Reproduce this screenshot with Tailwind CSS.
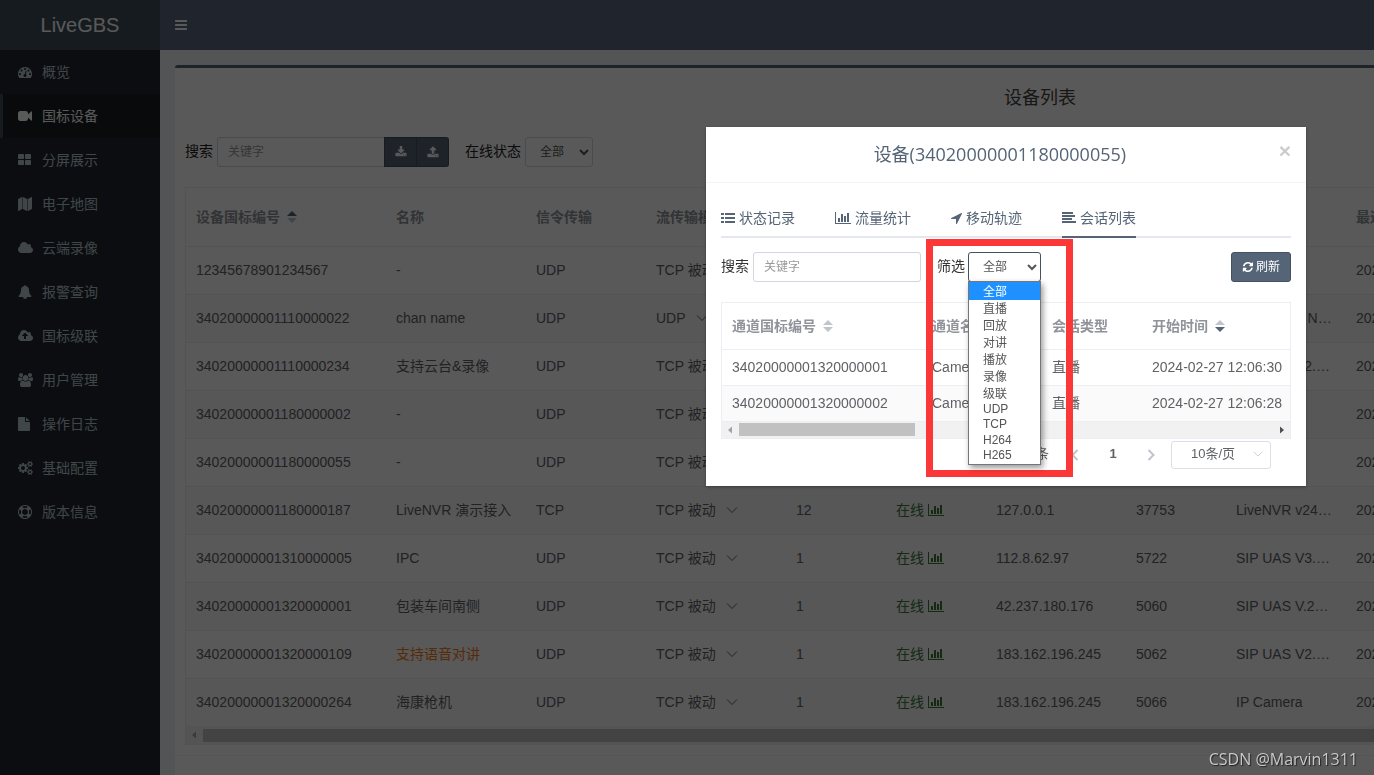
<!DOCTYPE html>
<html lang="zh-CN">
<head>
<meta charset="utf-8">
<title>LiveGBS</title>
<script src="https://cdn.jsdelivr.net/npm/@tailwindcss/browser@4"></script>
</head>
<body class="h-screen overflow-hidden bg-[#ecf0f5] font-['Liberation_Sans','Noto_Sans_CJK_SC',sans-serif] text-sm text-[#333]">
<svg class="hidden">
  <symbol id="bars" viewBox="0 0 1792 1792"><path d="M1664 1344v128q0 26-19 45t-45 19h-1408q-26 0-45-19t-19-45v-128q0-26 19-45t45-19h1408q26 0 45 19t19 45zm0-512v128q0 26-19 45t-45 19h-1408q-26 0-45-19t-19-45v-128q0-26 19-45t45-19h1408q26 0 45 19t19 45zm0-512v128q0 26-19 45t-45 19h-1408q-26 0-45-19t-19-45v-128q0-26 19-45t45-19h1408q26 0 45 19t19 45z"/></symbol>
  <symbol id="dashboard" viewBox="0 0 1792 1792"><path d="M384 1152q0-53-37.500-90.500t-90.500-37.500-90.500 37.500-37.500 90.500 37.500 90.500 90.500 37.500 90.500-37.500 37.500-90.500zm192-448q0-53-37.500-90.500t-90.500-37.500-90.500 37.500-37.500 90.500 37.500 90.500 90.500 37.500 90.500-37.500 37.500-90.500zm428 481l101-382q6-26-7.500-48.500t-38.500-29.500-48 6.500-30 39.500l-101 382q-60 5-107 43.500t-63 98.500q-20 77 20 146t117 89 146-20 89-117q16-60-6-117t-72-91zm660-33q0-53-37.500-90.500t-90.500-37.500-90.500 37.500-37.500 90.500 37.500 90.500 90.500 37.500 90.500-37.500 37.500-90.500zm-640-640q0-53-37.500-90.500t-90.500-37.500-90.500 37.500-37.500 90.500 37.500 90.500 90.500 37.500 90.500-37.500 37.500-90.500zm448 192q0-53-37.500-90.500t-90.500-37.500-90.500 37.500-37.500 90.500 37.500 90.500 90.500 37.500 90.500-37.500 37.500-90.500zm320 448q0 261-141 483-19 29-54 29h-1402q-35 0-54-29-141-221-141-483 0-182 71-348t191-286 286-191 348-71 348 71 286 191 191 286 71 348z"/></symbol>
  <symbol id="video" viewBox="0 0 1792 1792"><path d="M1792 352v1088q0 42-39 59-13 5-25 5-27 0-45-19l-403-403v166q0 119-84.500 203.500t-203.500 84.500h-704q-119 0-203.500-84.500t-84.500-203.500v-704q0-119 84.500-203.500t203.500-84.500h704q119 0 203.500 84.500t84.500 203.500v165l403-402q18-19 45-19 12 0 25 5 39 17 39 59z"/></symbol>
  <symbol id="thlarge" viewBox="64 0 1792 1792"><path d="M832 1024v384q0 52-38 90t-90 38h-512q-52 0-90-38t-38-90v-384q0-52 38-90t90-38h512q52 0 90 38t38 90zm0-768v384q0 52-38 90t-90 38h-512q-52 0-90-38t-38-90v-384q0-52 38-90t90-38h512q52 0 90 38t38 90zm896 768v384q0 52-38 90t-90 38h-512q-52 0-90-38t-38-90v-384q0-52 38-90t90-38h512q52 0 90 38t38 90zm0-768v384q0 52-38 90t-90 38h-512q-52 0-90-38t-38-90v-384q0-52 38-90t90-38h512q52 0 90 38t38 90z"/></symbol>
  <symbol id="map" viewBox="0 0 2048 1792"><path d="M512 0q13 0 22.500 9.500t9.500 22.500v1472q0 20-17 28l-480 256q-7 4-15 4-13 0-22.500-9.500t-9.500-22.500v-1472q0-20 17-28l480-256q7-4 15-4zm1248 0q13 0 22.500 9.500t9.500 22.500v1472q0 20-17 28l-480 256q-7 4-15 4-13 0-22.500-9.500t-9.500-22.500v-1472q0-20 17-28l480-256q7-4 15-4zm-1120 0q8 0 14 3l512 256q18 10 18 29v1472q0 13-9.500 22.500t-22.500 9.500q-8 0-14-3l-512-256q-18-10-18-29v-1472q0-13 9.500-22.500t22.500-9.500z"/></symbol>
  <symbol id="cloud" viewBox="0 0 2048 1792"><path d="M1920 1152q0 159-112.500 271.500t-271.500 112.500h-1088q-185 0-316.500-131.500t-131.500-316.500q0-132 71-241.500t187-163.500q-2-28-2-43 0-212 150-362t362-150q158 0 286.500 88t187.500 230q70-62 166-62 106 0 181 75t75 181q0 75-41 138 129 30 213 134.500t84 239.500z"/></symbol>
  <symbol id="cloudup" viewBox="0 0 2048 1792"><path d="M1280 864q0-14-9-23l-352-352q-9-9-23-9t-23 9l-351 351q-10 12-10 24 0 14 9 23t23 9h224v352q0 13 9.500 22.500t22.500 9.500h192q13 0 22.500-9.500t9.500-22.500v-352h224q13 0 22.500-9.500t9.500-22.500zm640 288q0 159-112.500 271.500t-271.500 112.500h-1088q-185 0-316.500-131.500t-131.500-316.500q0-130 70-240t188-165q-2-30-2-43 0-212 150-362t362-150q156 0 285.500 87t188.500 231q71-62 166-62 106 0 181 75t75 181q0 76-41 138 130 31 213.500 135.500t83.500 238.500z"/></symbol>
  <symbol id="bell" viewBox="0 0 1792 1792"><path d="M912 1696q0-16-16-16-59 0-101.500-42.500t-42.500-101.500q0-16-16-16t-16 16q0 73 51.500 124.500t124.500 51.500q16 0 16-16zm816-288q0 52-38 90t-90 38h-448q0 106-75 181t-181 75-181-75-75-181h-448q-52 0-90-38t-38-90q50-42 91-88t85-119.500 74.500-158.500 50-206 19.500-260q0-152 117-282.500t307-158.500q-8-19-8-39 0-40 28-68t68-28 68 28 28 68q0 20-8 39 190 28 307 158.500t117 282.500q0 139 19.500 260t50 206 74.500 158.500 85 119.500 91 88z"/></symbol>
  <symbol id="users" viewBox="64 0 2048 1792"><path d="M657 896q-162 5-265 128h-134q-82 0-138-40.500t-56-118.500q0-353 124-353 6 0 43.500 21t97.500 42.500 119 21.500q67 0 133-23-5 37-5 66 0 139 81 256zm1071 637q0 120-73 189.500t-194 69.500h-874q-121 0-194-69.500t-73-189.500q0-53 3.500-103.500t14-109 26.500-108.500 43-97.500 62-81 85.500-53.500 111.500-20q10 0 43 21.500t73 48 107 48 135 21.500 135-21.500 107-48 73-48 43-21.500q61 0 111.500 20t85.500 53.500 62 81 43 97.500 26.500 108.500 14 109 3.500 103.500zm-1024-1277q0 106-75 181t-181 75-181-75-75-181 75-181 181-75 181 75 75 181zm704 384q0 159-112.500 271.500t-271.500 112.500-271.500-112.500-112.500-271.500 112.500-271.500 271.500-112.500 271.500 112.500 112.500 271.500zm576 225q0 78-56 118.500t-138 40.500h-134q-103-123-265-128 81-117 81-256 0-29-5-66 66 23 133 23 59 0 119-21.500t97.500-42.500 43.500-21q124 0 124 353zm-128-609q0 106-75 181t-181 75-181-75-75-181 75-181 181-75 181 75 75 181z"/></symbol>
  <symbol id="file" viewBox="128 0 1792 1792"><path d="M1152 512v-472q22 14 36 28l408 408q14 14 28 36h-472zm-128 32q0 40 28 68t68 28h544v1056q0 40-28 68t-68 28h-1344q-40 0-68-28t-28-68v-1600q0-40 28-68t68-28h800v544z"/></symbol>
  <symbol id="cogs" viewBox="0 0 2048 1792"><path d="M896 896q0-106-75-181t-181-75-181 75-75 181 75 181 181 75 181-75 75-181zm768 512q0-52-38-90t-90-38-90 38-38 90q0 53 37.500 90.500t90.500 37.500 90.500-37.500 37.500-90.500zm0-1024q0-52-38-90t-90-38-90 38-38 90q0 53 37.500 90.500t90.500 37.500 90.500-37.500 37.500-90.500zm-384 421v185q0 10-7 19.500t-16 10.500l-155 24q-11 35-32 76 34 48 90 115 7 11 7 20 0 12-7 19-23 30-82.500 89.500t-78.500 59.500q-11 0-21-7l-115-90q-37 19-77 31-11 108-23 155-7 24-30 24h-186q-11 0-20-7.500t-10-17.500l-23-153q-34-10-75-31l-118 89q-7 7-20 7-11 0-21-8-144-133-144-160 0-9 7-19 10-14 41-53t47-61q-23-44-35-82l-152-24q-10-1-17-9.500t-7-19.500v-185q0-10 7-19.500t16-10.500l155-24q11-35 32-76-34-48-90-115-7-11-7-20 0-12 7-20 22-30 82-89t79-59q11 0 21 7l115 90q34-18 77-32 11-108 23-154 7-24 30-24h186q11 0 20 7.500t10 17.500l23 153q34 10 75 31l118-89q8-7 20-7 11 0 21 8 144 133 144 160 0 8-7 19-12 16-42 54t-45 60q23 48 34 82l152 23q10 2 17 10.500t7 19.500zm640 533v140q0 16-149 31-12 27-30 52 51 113 51 138 0 4-4 7-122 71-124 71-8 0-46-47t-52-68q-20 2-30 2t-30-2q-14 21-52 68t-46 47q-2 0-124-71-4-3-4-7 0-25 51-138-18-25-30-52-149-15-149-31v-140q0-16 149-31 13-29 30-52-51-113-51-138 0-4 4-7 4-2 35-20t59-34 30-16q8 0 46 46.500t52 67.500q20-2 30-2t30 2q51-71 92-112l6-2q4 0 124 70 4 3 4 7 0 25-51 138 17 23 30 52 149 15 149 31zm0-1024v140q0 16-149 31-12 27-30 52 51 113 51 138 0 4-4 7-122 71-124 71-8 0-46-47t-52-68q-20 2-30 2t-30-2q-14 21-52 68t-46 47q-2 0-124-71-4-3-4-7 0-25 51-138-18-25-30-52-149-15-149-31v-140q0-16 149-31 13-29 30-52-51-113-51-138 0-4 4-7 4-2 35-20t59-34 30-16q8 0 46 46.500t52 67.500q20-2 30-2t30 2q51-71 92-112l6-2q4 0 124 70 4 3 4 7 0 25-51 138 17 23 30 52 149 15 149 31z"/></symbol>
  <symbol id="ring" viewBox="0 0 1792 1792"><path d="M896 0q182 0 348 71t286 191 191 286 71 348-71 348-191 286-286 191-348 71-348-71-286-191-191-286-71-348 71-348 191-286 286-191 348-71zm0 128q-190 0-361 90l194 194q82-28 167-28t167 28l194-194q-171-90-361-90zm-678 1129l194-194q-28-82-28-167t28-167l-194-194q-90 171-90 361t90 361zm678 407q190 0 361-90l-194-194q-82 28-167 28t-167-28l-194 194q171 90 361 90zm0-384q159 0 271.500-112.500t112.500-271.500-112.500-271.500-271.500-112.500-271.500 112.500-112.500 271.500 112.500 271.500 271.500 112.500zm484-217l194 194q90-171 90-361t-90-361l-194 194q28 82 28 167t-28 167z"/></symbol>
  <symbol id="download" viewBox="0 0 1792 1792"><path d="M1344 1344q0-26-19-45t-45-19-45 19-19 45 19 45 45 19 45-19 19-45zm256 0q0-26-19-45t-45-19-45 19-19 45 19 45 45 19 45-19 19-45zm128-224v320q0 40-28 68t-68 28h-1472q-40 0-68-28t-28-68v-320q0-40 28-68t68-28h465l135 136q58 56 136 56t136-56l136-136h464q40 0 68 28t28 68zm-325-569q17 41-14 70l-448 448q-18 19-45 19t-45-19l-448-448q-31-29-14-70 17-39 59-39h256v-448q0-26 19-45t45-19h256q26 0 45 19t19 45v448h256q42 0 59 39z"/></symbol>
  <symbol id="upload" viewBox="0 0 1792 1792"><path d="M1344 1472q0-26-19-45t-45-19-45 19-19 45 19 45 45 19 45-19 19-45zm256 0q0-26-19-45t-45-19-45 19-19 45 19 45 45 19 45-19 19-45zm128-224v320q0 40-28 68t-68 28h-1472q-40 0-68-28t-28-68v-320q0-40 28-68t68-28h427q21 56 70.500 92t110.500 36h256q61 0 110.500-36t70.500-92h427q40 0 68 28t28 68zm-325-648q-17 40-59 40h-256v448q0 26-19 45t-45 19h-256q-26 0-45-19t-19-45v-448h-256q-42 0-59-40-17-39 14-69l448-448q18-19 45-19t45 19l448 448q31 30 14 69z"/></symbol>
  <symbol id="chart" viewBox="0 0 2048 1792"><path d="M640 896v512h-256v-512h256zm384-512v1024h-256v-1024h256zm1024 1152v128h-2048v-1536h128v1408h1920zm-640-896v768h-256v-768h256zm384-384v1152h-256v-1152h256z"/></symbol>
  <symbol id="arrow" viewBox="192 0 1408 1792"><path d="M1593 349l-640 1280q-17 35-57 35-5 0-15-2-22-5-35.500-22.500t-13.500-39.500v-576h-576q-22 0-39.500-13.500t-22.500-35.500 4-42 29-30l1280-640q13-7 29-7 27 0 45 19 15 14 18.500 34.500t-6.500 39.500z"/></symbol>
  <symbol id="refresh" viewBox="0 0 1664 1792"><path d="M1639 1056q0 5-1 7-64 268-268 434.500t-478 166.500q-146 0-282.500-55t-243.500-157l-129 129q-19 19-45 19t-45-19-19-45v-448q0-26 19-45t45-19h448q26 0 45 19t19 45-19 45l-137 137q71 66 161 102t187 36q134 0 250-65t186-179q11-17 53-117 8-23 30-23h192q13 0 22.500 9.500t9.500 22.500zm25-800v448q0 26-19 45t-45 19h-448q-26 0-45-19t-19-45 19-45l138-138q-148-137-349-137-134 0-250 65t-186 179q-11 17-53 117-8 23-30 23h-199q-13 0-22.500-9.500t-9.500-22.500v-7q65-268 270-434.500t480-166.500q146 0 284 55.500t245 156.500l130-129q19-19 45-19t45 19 19 45z"/></symbol>
  <symbol id="list" viewBox="0 0 14 14"><path d="M0 2h3v2H0zM4 2h10v2H4zM0 6h3v2H0zM4 6h10v2H4zM0 10h3v2H0zM4 10h10v2H4z"/></symbol>
  <symbol id="align" viewBox="0 0 14 14"><path d="M0 1h11v2H0zM0 4h13v2H0zM0 7h10v2H0zM0 10h14v2H0z"/></symbol>
  <symbol id="down" viewBox="0 0 12 12"><path d="M1 3.500l5 5 5-5" fill="none" stroke="currentColor"/></symbol>
</svg>

<div class="min-w-[1920px]">
  <header class="flex h-[50px] text-white">
    <a href="#" class="flex w-[160px] items-center justify-center bg-[#3f4f5b] text-xl">LiveGBS</a>
    <div class="flex flex-1 items-center bg-[#5a6980] pl-3.5">
      <button aria-label="菜单" class="flex"><svg class="size-3.5 fill-current"><use href="#bars"/></svg></button>
    </div>
  </header>
  <div class="flex">
    <nav class="h-screen w-[160px] shrink-0 bg-[#202731] text-[#b8c7ce]" id="nav"></nav>
    <main class="flex-1 p-[15px]">
      <section class="h-screen rounded-t-[3px] border-t-3 border-[#556577] bg-white">
        <h1 class="flex h-[60px] items-center justify-center text-lg text-[#444]">设备列表</h1>
        <div class="mt-[9px] flex h-[30px] items-center px-2.5">
          <label for="q1" class="mr-1 pb-0.5 text-[#222]">搜索</label>
          <input id="q1" placeholder="关键字" class="h-[30px] w-[167px] rounded-l-[3px] border border-r-0 border-[#d2d6de] px-2.5 text-xs placeholder:text-[#999]">
          <button aria-label="导入" class="flex h-[30px] w-[33px] items-center justify-center border border-[#44515f] bg-[#556577] text-white"><svg class="h-3 w-3.5 fill-current"><use href="#download"/></svg></button>
          <button aria-label="导出" class="flex h-[30px] w-8 items-center justify-center rounded-r-[3px] border border-l-0 border-[#44515f] bg-[#556577] text-white"><svg class="h-3 w-3.5 fill-current"><use href="#upload"/></svg></button>
          <label for="s1" class="mr-1 ml-4 pb-0.5 text-[#222]">在线状态</label>
          <select id="s1" class="h-[30px] w-[68px] rounded-[3px] border border-[#d2d6de] bg-white px-2.5 text-xs text-[#555]"><option>全部</option><option>在线</option><option>离线</option></select>
        </div>
        <div class="mx-2.5 mt-5 overflow-hidden border border-[#ebeef5]">
          <table class="w-full table-fixed border-collapse text-left">
            <thead><tr class="h-[58px] border-b border-[#ebeef5] text-[#909399]">
              <th class="w-[200px] px-2.5"><span class="flex items-center gap-[7px]">设备国标编号 <svg class="h-3 w-2.5" viewBox="0 0 10 12"><path d="M0 5l5-5 5 5z" fill="#556577"/><path d="M0 7l5 5 5-5z" fill="#c0c4cc"/></svg></span></th>
              <th class="w-[140px] px-2.5">名称</th><th class="w-[120px] px-2.5">信令传输</th><th class="w-[140px] px-2.5">流传输模式</th><th class="w-[100px] px-2.5">通道数</th><th class="w-[100px] px-2.5">在线状态</th><th class="w-[140px] px-2.5">出口IP</th><th class="w-[100px] px-2.5">端口</th><th class="w-[120px] px-2.5">厂家</th><th class="px-2.5">最近心跳</th>
            </tr></thead>
            <tbody id="rows" class="text-[#606266]"></tbody>
          </table>
          <div class="flex h-[17px] items-center bg-[#f1f1f1]">
            <svg class="ml-1.5 h-2 w-1 fill-[#a3a3a3]" viewBox="0 0 4 7"><path d="M4 0v7L0 3.500z"/></svg>
            <div class="ml-[7px] h-[13px] flex-1 bg-[#c1c1c1]"></div>
          </div>
        </div>
        <div class="mt-2.5 border-t border-[#f4f4f4]"></div>
      </section>
    </main>
  </div>
</div>

<div class="fixed inset-0 bg-black/65"></div>

<div role="dialog" aria-labelledby="dt" class="absolute top-[127px] left-[706px] w-[600px] bg-white pb-[17px] shadow-[0_1px_3px_rgba(0,0,0,0.3)]">
  <div class="flex h-14 items-center border-b border-[#f4f4f4] pr-[15px] pl-[15px]">
    <h2 id="dt" class="flex-1 pb-0.5 text-center font-['Open_Sans','Noto_Sans_CJK_SC',sans-serif] text-lg text-[#556577]">设备(34020000001180000055)</h2>
    <button aria-label="关闭" class="flex h-8 items-start text-[21px] leading-6 font-bold text-[#ccc]">×</button>
  </div>
  <div class="px-[15px] pt-4">
    <div role="tablist" class="flex h-[39px] gap-10 border-b-2 border-[#e4e7ed] text-[#556577]">
      <button role="tab" class="flex items-center gap-1"><svg class="size-3.5 fill-current"><use href="#list"/></svg>状态记录</button>
      <button role="tab" class="flex items-center gap-1"><svg class="h-3.5 w-4 fill-current"><use href="#chart"/></svg>流量统计</button>
      <button role="tab" class="flex items-center gap-1"><svg class="h-3.5 w-[11px] fill-current"><use href="#arrow"/></svg>移动轨迹</button>
      <button role="tab" aria-selected="true" class="-mb-0.5 flex items-center gap-1 border-b-2 border-[#556577]"><svg class="size-3.5 fill-current"><use href="#align"/></svg>会话列表</button>
    </div>
    <div class="mt-3.5 flex h-[30px] items-center">
      <label for="q2" class="mr-1 pb-0.5">搜索</label>
      <input id="q2" placeholder="关键字" class="h-[30px] w-[168px] rounded-[3px] border border-[#d2d6de] px-2.5 text-xs placeholder:text-[#999]">
      <label for="s2" class="mr-[3px] ml-4 pb-0.5">筛选</label>
      <div class="relative">
        <select id="s2" class="block h-[30px] w-[73px] rounded-[3px] border border-[#44515f] bg-white px-2.5 text-xs text-[#555]"><option>全部</option></select>
        <ul role="listbox" aria-label="筛选" class="absolute top-[29px] left-0 z-10 w-[73px] border border-[#767676] bg-white pb-px text-xs text-[#555] shadow-[2px_3px_6px_rgba(0,0,0,0.4)]">
          <li role="option" aria-selected="true" class="h-[18px] bg-[#1e90ff] pl-3.5 leading-5 text-white">全部</li>
          <li role="option" class="h-[17px] pl-3.5 leading-[19px]">直播</li>
          <li role="option" class="h-[17px] pl-3.5 leading-[19px]">回放</li>
          <li role="option" class="h-[17px] pl-3.5 leading-[19px]">对讲</li>
          <li role="option" class="h-[17px] pl-3.5 leading-[19px]">播放</li>
          <li role="option" class="h-[17px] pl-3.5 leading-[19px]">录像</li>
          <li role="option" class="h-[17px] pl-3.5 leading-[19px]">级联</li>
          <li role="option" class="h-[15px] pl-3.5 leading-[15px]">UDP</li>
          <li role="option" class="h-[15px] pl-3.5 leading-[15px]">TCP</li>
          <li role="option" class="h-4 pl-3.5 leading-4">H264</li>
          <li role="option" class="h-[15px] pl-3.5 leading-[15px]">H265</li>
        </ul>
      </div>
      <button class="ml-auto flex h-[30px] w-[60px] items-center justify-center gap-[3px] rounded-[3px] border border-[#44515f] bg-[#556577] text-xs text-white"><svg class="h-3 w-[11px] fill-current"><use href="#refresh"/></svg>刷新</button>
    </div>
    <div class="mt-5 overflow-hidden border border-[#ebeef5]">
      <table class="w-full table-fixed border-collapse text-left whitespace-nowrap">
        <thead><tr class="h-[46px] border-b border-[#ebeef5] text-[#909399]">
          <th class="w-[200px] px-2.5"><span class="flex items-center gap-[7px]">通道国标编号 <svg class="h-3 w-2.5" viewBox="0 0 10 12"><path d="M0 5l5-5 5 5z" fill="#c0c4cc"/><path d="M0 7l5 5 5-5z" fill="#c0c4cc"/></svg></span></th>
          <th class="w-[120px] px-2.5">通道名称</th><th class="w-[100px] px-2.5">会话类型</th>
          <th class="px-2.5"><span class="flex items-center gap-[7px]">开始时间 <svg class="h-3 w-2.5" viewBox="0 0 10 12"><path d="M0 5l5-5 5 5z" fill="#c0c4cc"/><path d="M0 7l5 5 5-5z" fill="#556577"/></svg></span></th>
        </tr></thead>
        <tbody class="text-[#606266]">
          <tr class="h-9 border-b border-[#ebeef5]"><td class="px-2.5">34020000001320000001</td><td class="px-2.5">Camera 1</td><td class="px-2.5">直播</td><td class="pl-2.5">2024-02-27 12:06:30</td></tr>
          <tr class="h-9 border-b border-[#ebeef5] bg-[#fafafa]"><td class="px-2.5">34020000001320000002</td><td class="px-2.5">Camera 2</td><td class="px-2.5">直播</td><td class="pl-2.5">2024-02-27 12:06:28</td></tr>
        </tbody>
      </table>
      <div class="flex h-4 items-center bg-[#f1f1f1]">
        <svg class="ml-1.5 h-2 w-1 fill-[#a3a3a3]" viewBox="0 0 4 7"><path d="M4 0v7L0 3.500z"/></svg>
        <div class="ml-[7px] h-[13px] w-44 bg-[#c1c1c1]"></div>
        <svg class="mr-1.5 ml-auto h-2 w-1 fill-[#505050]" viewBox="0 0 4 7"><path d="M0 0v7l4-3.500z"/></svg>
      </div>
    </div>
    <div class="mt-0.5 flex h-7 items-center justify-end pr-5 text-[13px] text-[#606266]">
      <span class="mr-5">共 2 条</span>
      <button aria-label="上一页" class="flex w-3 justify-center text-[#c0c4cc]"><svg class="size-3 rotate-90 stroke-2"><use href="#down"/></svg></button>
      <button class="w-16 font-bold">1</button>
      <button aria-label="下一页" class="flex w-3 justify-center text-[#c0c4cc]"><svg class="size-3 -rotate-90 stroke-2"><use href="#down"/></svg></button>
      <div class="relative ml-3.5">
        <select aria-label="每页条数" class="block h-7 w-[100px] appearance-none rounded-[3px] border border-[#dcdfe6] bg-white pl-[19px] text-[13px]"><option>10条/页</option></select>
        <svg class="pointer-events-none absolute top-2 right-2 size-2.5 text-[#c0c4cc]" viewBox="0 0 12 12"><use href="#down"/></svg>
      </div>
    </div>
  </div>
</div>

<div class="pointer-events-none absolute top-[239px] left-[926px] h-[238px] w-[147px] border-7 border-[#fc3737]"></div>
<div class="absolute right-4 bottom-1 font-['Open_Sans',sans-serif] text-base text-[#c8c8c8] [text-shadow:1px_1px_1px_#222]">CSDN @Marvin1311</div>

<script>
  const nav = [['dashboard','概览'],['video','国标设备'],['thlarge','分屏展示'],['map','电子地图'],['cloud','云端录像'],['bell','报警查询'],['cloudup','国标级联'],['users','用户管理'],['file','操作日志'],['cogs','基础配置'],['ring','版本信息']];
  const wide = ['map','cloud','cloudup','users','cogs'];
  document.getElementById('nav').innerHTML = nav.map(([icon, text], i) =>
    `<a href="#" class="flex h-11 items-center border-l-3 pl-[15px] ${i === 1 ? 'border-[#3f4f5b] bg-[#1b1e20] text-white' : 'border-transparent'}"><span class="w-6"><svg class="h-3.5 fill-current ${wide.includes(icon) ? 'w-4' : 'w-3.5'}"><use href="#${icon}"/></svg></span>${text}</a>`).join('');
  const data = [
    ['12345678901234567','-','UDP','TCP 被动','1','127.0.0.1','5060','-'],
    ['34020000001110000022','chan name','UDP','UDP','1','127.0.0.1','5060','Embedded N…'],
    ['34020000001110000234','支持云台&amp;录像','UDP','TCP 被动','1','127.0.0.1','5060','SIP UAS V2.…'],
    ['34020000001180000002','-','UDP','TCP 被动','1','127.0.0.1','5060','-'],
    ['34020000001180000055','-','UDP','TCP 被动','2','127.0.0.1','5060','-'],
    ['34020000001180000187','LiveNVR 演示接入','TCP','TCP 被动','12','127.0.0.1','37753','LiveNVR v24…'],
    ['34020000001310000005','IPC','UDP','TCP 被动','1','112.8.62.97','5722','SIP UAS V3.…'],
    ['34020000001320000001','包装车间南侧','UDP','TCP 被动','1','42.237.180.176','5060','SIP UAS V.2…'],
    ['34020000001320000109','支持语音对讲','UDP','TCP 被动','1','183.162.196.245','5062','SIP UAS V2.…'],
    ['34020000001320000264','海康枪机','UDP','TCP 被动','1','183.162.196.245','5066','IP Camera']];
  document.getElementById('rows').innerHTML = data.map((r, i) =>
    `<tr class="h-12 border-b border-[#ebeef5] whitespace-nowrap ${i % 2 ? 'bg-[#fafafa]' : ''}"><td class="px-2.5">${r[0]}</td><td class="px-2.5 ${i === 8 ? 'text-[#f57c17]' : ''}">${r[1]}</td><td class="px-2.5">${r[2]}</td><td class="px-2.5"><span class="flex items-center gap-2.5">${r[3]}<svg class="size-3"><use href="#down"/></svg></span></td><td class="px-2.5">${r[4]}</td><td class="px-2.5 text-[#3c763d]"><span class="flex items-center gap-1">在线<svg class="h-3.5 w-4 fill-current"><use href="#chart"/></svg></span></td><td class="px-2.5">${r[5]}</td><td class="px-2.5">${r[6]}</td><td class="px-2.5">${r[7]}</td><td class="px-2.5">2024-02-27 12:06:30</td></tr>`).join('');
</script>
</body>
</html>
